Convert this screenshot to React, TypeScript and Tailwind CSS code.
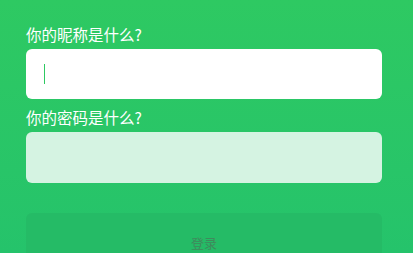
export default function App() {
  return (
    <div
      className="w-[413px] h-[253px] overflow-hidden bg-gradient-to-b from-[#2ec962] to-[#25c36b] pl-[26px] pt-[23px]"
      style={{ fontFamily: '"Noto Sans CJK SC", "Noto Sans", sans-serif' }}
    >
      <div className="w-[356px]">
        <div className="text-[15.5px] leading-[22px] text-white">你的昵称是什么?</div>
        <div className="mt-[4px] h-[50px] rounded-[6px] bg-white flex items-center pl-[18px]">
          <div className="w-[1px] h-[20px] bg-[#2ec962]" />
        </div>
        <div className="mt-[7px] text-[15.5px] leading-[22px] text-white">你的密码是什么?</div>
        <div className="mt-[4px] h-[51px] rounded-[6px] bg-[#d5f3e2]" />
        <div className="mt-[30px] h-[60px] rounded-[6px] bg-[#25bb66] flex items-center justify-center text-[13px] text-[#3f8a5c]">
          登录
        </div>
      </div>
    </div>
  );
}
